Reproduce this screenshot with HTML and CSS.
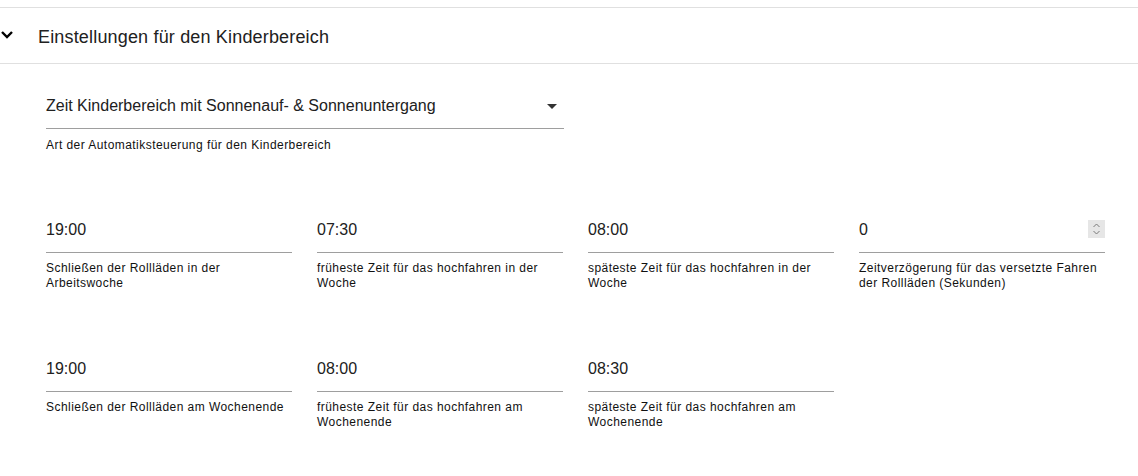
FILE: index.html
```html
<!DOCTYPE html>
<html lang="de">
    <head>
        <meta charset="UTF-8" />
        <meta name="viewport" content="width=device-width, initial-scale=1.0" />
        <title>Einstellungen für den Kinderbereich</title>
        <link rel="stylesheet" href="styles.css">
    </head>
    <body>
        <div class="panel">
            <div class="panel-header">
                <svg class="chevron" width="14" height="9" viewBox="0 0 14 9">
                    <path d="M2 2 L7 7 L12 2" fill="none" stroke="#000" stroke-width="2.4" />
                </svg>
                <span class="panel-title">Einstellungen für den Kinderbereich</span>
            </div>
            <div class="panel-body">
                <div class="field select-field">
                    <div class="field-input">
                        <span class="value">Zeit Kinderbereich mit Sonnenauf- &amp; Sonnenuntergang</span>
                        <span class="select-arrow"></span>
                    </div>
                    <div class="helper">Art der Automatiksteuerung für den Kinderbereich</div>
                </div>

                <div class="field-grid">
                    <div class="field">
                        <div class="field-input"><span class="value">19:00</span></div>
                        <div class="helper">Schließen der Rollläden in der Arbeitswoche</div>
                    </div>
                    <div class="field">
                        <div class="field-input"><span class="value">07:30</span></div>
                        <div class="helper">früheste Zeit für das hochfahren in der Woche</div>
                    </div>
                    <div class="field">
                        <div class="field-input"><span class="value">08:00</span></div>
                        <div class="helper">späteste Zeit für das hochfahren in der Woche</div>
                    </div>
                    <div class="field">
                        <div class="field-input">
                            <span class="value">0</span>
                            <span class="spinner">
                                <svg width="17" height="18" viewBox="0 0 17 18">
                                    <path d="M5.5 7 L8.5 4 L11.5 7 M5.5 11 L8.5 14 L11.5 11" fill="none" stroke="#7a7a7a" stroke-width="1" />
                                </svg>
                            </span>
                        </div>
                        <div class="helper">Zeitverzögerung für das versetzte Fahren der Rollläden (Sekunden)</div>
                    </div>
                    <div class="field">
                        <div class="field-input"><span class="value">19:00</span></div>
                        <div class="helper">Schließen der Rollläden am Wochenende</div>
                    </div>
                    <div class="field">
                        <div class="field-input"><span class="value">08:00</span></div>
                        <div class="helper">früheste Zeit für das hochfahren am Wochenende</div>
                    </div>
                    <div class="field">
                        <div class="field-input"><span class="value">08:30</span></div>
                        <div class="helper">späteste Zeit für das hochfahren am Wochenende</div>
                    </div>
                </div>
            </div>
        </div>
    </body>
</html>
```

FILE: styles.css
```css
body {
    font-family: "Liberation Sans", Arial, sans-serif;
    margin: 0;
    background-color: #fff;
    color: rgba(0, 0, 0, 0.87);
}
.panel {
    margin-top: 7px;
    border-top: 1px solid #e0e0e0;
}
.panel-header {
    display: flex;
    align-items: center;
    height: 55px;
    border-bottom: 1px solid #e0e0e0;
}
.chevron {
    margin-left: 0;
    margin-top: -3px;
}
.panel-title {
    margin-left: 24px;
    margin-top: 3px;
    font-size: 18px;
    letter-spacing: 0.17px;
    color: #212121;
}
.panel-body {
    padding: 0 32px 0 46px;
}
.select-field {
    width: 518px;
    margin-top: 32px;
}
.field-input {
    display: flex;
    align-items: center;
    justify-content: space-between;
    height: 20px;
    padding-bottom: 12px;
    border-bottom: 1px solid #9e9e9e;
    font-size: 16px;
    line-height: 20px;
    color: #212121;
}
.select-arrow {
    width: 0;
    height: 0;
    margin-right: 7px;
    margin-top: 1px;
    border-left: 5px solid transparent;
    border-right: 5px solid transparent;
    border-top: 5px solid #333;
}
.helper {
    margin-top: 8px;
    font-size: 12px;
    line-height: 15px;
    letter-spacing: 0.45px;
    color: #111;
}
.select-field .helper {
    margin-top: 9px;
}
.field-grid {
    display: grid;
    grid-template-columns: repeat(4, 246px);
    column-gap: 25px;
}
.field-grid .field {
    padding-top: 67px;
    height: 72px;
}
.spinner {
    display: flex;
    background-color: #e6e6e6;
    margin-top: -2px;
}
```
